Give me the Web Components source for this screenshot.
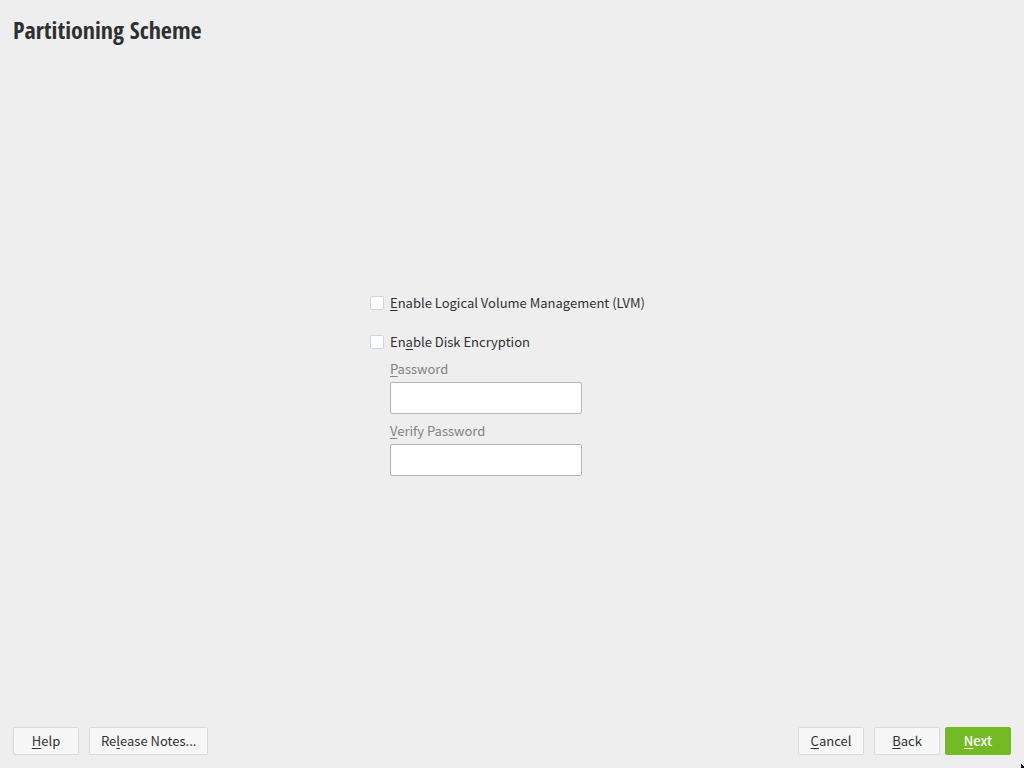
<!DOCTYPE html>
<html lang="en">
<head>
<meta charset="utf-8">
<title>Partitioning Scheme</title>
<style>
html, body { height: 100%; margin: 0; }
body { background: #eeeeee; color: #2e3132; font: 13px/20px "Source Sans Pro", "Noto Sans CJK SC", "Noto Sans", sans-serif; overflow: hidden; }
</style>
</head>
<body>
<installer-page heading="Partitioning Scheme">
  <check-option><u>E</u>nable Logical Volume Management (LVM)</check-option>
  <check-option>En<u>a</u>ble Disk Encryption</check-option>
  <password-field disabled><u>P</u>assword</password-field>
  <password-field disabled><u>V</u>erify Password</password-field>
  <wizard-button slot="info"><u>H</u>elp</wizard-button>
  <wizard-button slot="info">Re<u>l</u>ease Notes...</wizard-button>
  <wizard-button slot="abort"><u>C</u>ancel</wizard-button>
  <wizard-button slot="steps"><u>B</u>ack</wizard-button>
  <wizard-button slot="steps" primary><u>N</u>ext</wizard-button>
</installer-page>
<mouse-pointer></mouse-pointer>
<script>
const mnemonic = `::slotted(u) { text-decoration: underline 1px; text-underline-offset: 2px; text-decoration-skip-ink: none; }`;

class ShadowElement extends HTMLElement {
  constructor() {
    super();
    this.attachShadow({ mode: "open" }).innerHTML = `<style>* { box-sizing: border-box; }${this.constructor.css}</style>${this.constructor.html}`;
  }
}

customElements.define("installer-page", class extends ShadowElement {
  static css = `
    :host { display: flex; flex-direction: column; min-height: 100vh; box-sizing: border-box; padding: 12px 13px 13px; }
    h1 { margin: 0; font: bold 24px/35px "Open Sans Condensed", "Noto Sans CJK SC", sans-serif; }
    main { flex: 1; display: flex; align-items: center; justify-content: center; padding-bottom: 6px; }
    form { display: grid; width: 284px; }
    footer { display: flex; align-items: center; }
    .info, .actions, .steps { display: flex; }
    .info { gap: 10px; flex: 1; }
    .actions { gap: 10px; }
    .steps { gap: 5px; }`;
  static html = `
    <h1></h1>
    <main><form><slot></slot></form></main>
    <footer>
      <div class="info"><slot name="info"></slot></div>
      <div class="actions"><slot name="abort"></slot><div class="steps"><slot name="steps"></slot></div></div>
    </footer>`;
  connectedCallback() {
    this.shadowRoot.querySelector("h1").textContent = this.getAttribute("heading");
  }
});

customElements.define("check-option", class extends ShadowElement {
  static css = `
    :host { display: block; }
    :host(:first-child) { margin-bottom: 19px; }
    label { display: flex; align-items: center; gap: 6px; white-space: nowrap; }
    input { appearance: none; width: 14px; height: 14px; margin: 0; background: #fff; border: 1px solid #ccd5e8; border-radius: 2px; }
    input:checked { background: #73ba25; }
    ${mnemonic}`;
  static html = `<label><input type="checkbox"><span><slot></slot></span></label>`;
});

customElements.define("password-field", class extends ShadowElement {
  static css = `
    :host { display: block; padding: 7px 0 0 20px; }
    label { display: block; margin-bottom: 3px; color: #828384; }
    input { display: block; width: 192px; height: 32px; margin: 0; padding: 4px 8px; background: #fff; border: 1px solid #b4b6b5; border-radius: 2px; font: inherit; }
    ${mnemonic}`;
  static html = `<label for="value"><slot></slot></label><input id="value" type="password">`;
  connectedCallback() {
    this.shadowRoot.querySelector("input").disabled = this.hasAttribute("disabled");
  }
});

customElements.define("wizard-button", class extends ShadowElement {
  static css = `
    :host { display: block; }
    button { display: block; min-width: 66px; height: 28px; margin: 0; padding: 0 11px; background: #f7f7f7; color: inherit; border: 1px solid #d8dcd8; border-radius: 2px; font: inherit; }
    :host([primary]) button { background: #73ba25; border-color: #73ba25; color: #fff; font-weight: 500; }
    ${mnemonic}`;
  static html = `<button type="button"><slot></slot></button>`;
});

customElements.define("mouse-pointer", class extends ShadowElement {
  static css = `
    :host { position: absolute; right: 0; bottom: 0; width: 3px; height: 4px; pointer-events: none; }
    svg { display: block; }`;
  static html = `<svg width="3" height="4" shape-rendering="crispEdges" aria-hidden="true"><path d="M0 0h1v1h1v1h1v2h-3z" fill="#000"/></svg>`;
});
</script>
</body>
</html>
